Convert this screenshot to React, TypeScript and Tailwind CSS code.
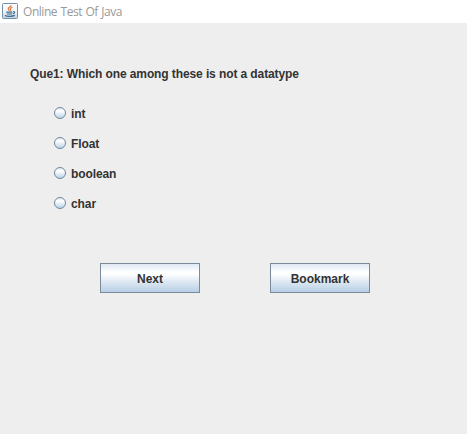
import { useState } from "react";

const options = ["int", "Float", "boolean", "char"];

function JavaIcon() {
  return (
    <svg width="16" height="16" viewBox="0 0 16 16" fill="none" className="shrink-0">
      <defs>
        <linearGradient id="tile" x1="0" y1="0" x2="0" y2="1">
          <stop offset="0" stopColor="#ffffff" />
          <stop offset="0.5" stopColor="#f1f4f6" />
          <stop offset="1" stopColor="#c3d3df" />
        </linearGradient>
      </defs>
      <rect x="0.5" y="0.5" width="15" height="15" rx="0.8" fill="url(#tile)" stroke="#718fa8" />
      <path d="M9.2 2.2C9.2 3.8 5.8 4.3 6.3 5.9C6.5 6.6 7.2 7.1 7.4 7.8" stroke="#df7f45" strokeWidth="1.4" />
      <path d="M10.4 4.3C8.6 4.8 8 5.5 8.6 6.3C9 6.8 8.9 7.4 8.3 7.9" stroke="#df7f45" strokeWidth="1.2" />
      <path d="M4.2 9.1H10.4M5 11H10M11 8.8C13.4 8.3 13 10.4 10.8 10.8" stroke="#3f698f" strokeWidth="1.1" />
      <path d="M2.8 12.5C5 13.6 10.5 13.6 12.8 12.4" stroke="#3f698f" strokeWidth="1.2" />
    </svg>
  );
}

function SwingButton({ label }: { label: string }) {
  return (
    <button className="h-[30px] w-[100px] border border-[#7a8a99] bg-[linear-gradient(180deg,#dfe9f3_0%,#ffffff_30%,#ffffff_35%,#dce7f2_65%,#b8cfe5_100%)] pt-px leading-4">
      {label}
    </button>
  );
}

export default function App() {
  const [selected, setSelected] = useState("");
  return (
    <div className="flex h-[434px] w-[467px] flex-col overflow-hidden bg-[#eeeeee] font-['Liberation_Sans',Arial,sans-serif] text-[12px] font-bold text-[#333333]">
      <header className="flex h-[23px] shrink-0 items-center gap-[5px] bg-white pb-px pl-[2px] font-['Open_Sans','Noto_Sans',sans-serif] font-normal text-[#999999]">
        <JavaIcon />
        <span className="whitespace-nowrap pt-px text-[12px] leading-4 tracking-[-0.45px] [word-spacing:0.7px]">Online Test Of Java</span>
      </header>
      <main className="pl-[30px] pt-[43px]">
        <h1 className="leading-4 tracking-[-0.1px]">Que1: Which one among these is not a datatype</h1>
        <div className="mt-4 flex flex-col pl-6">
          {options.map((option) => (
            <label key={option} className="flex h-[30px] items-center gap-[5px]">
              <input
                type="radio"
                name="answer"
                checked={selected === option}
                onChange={() => setSelected(option)}
                className="size-3 shrink-0 appearance-none rounded-full border border-[#71879b] bg-[linear-gradient(180deg,#dfe9f3_0%,#ffffff_30%,#dce9f4_65%,#b8d3e9_100%)] checked:bg-[#333333]"
              />
              <span className="pt-px leading-4 tracking-[-0.1px]">{option}</span>
            </label>
          ))}
        </div>
        <div className="mt-[45px] flex gap-[70px] pl-[70px]">
          <SwingButton label="Next" />
          <SwingButton label="Bookmark" />
        </div>
      </main>
    </div>
  );
}
